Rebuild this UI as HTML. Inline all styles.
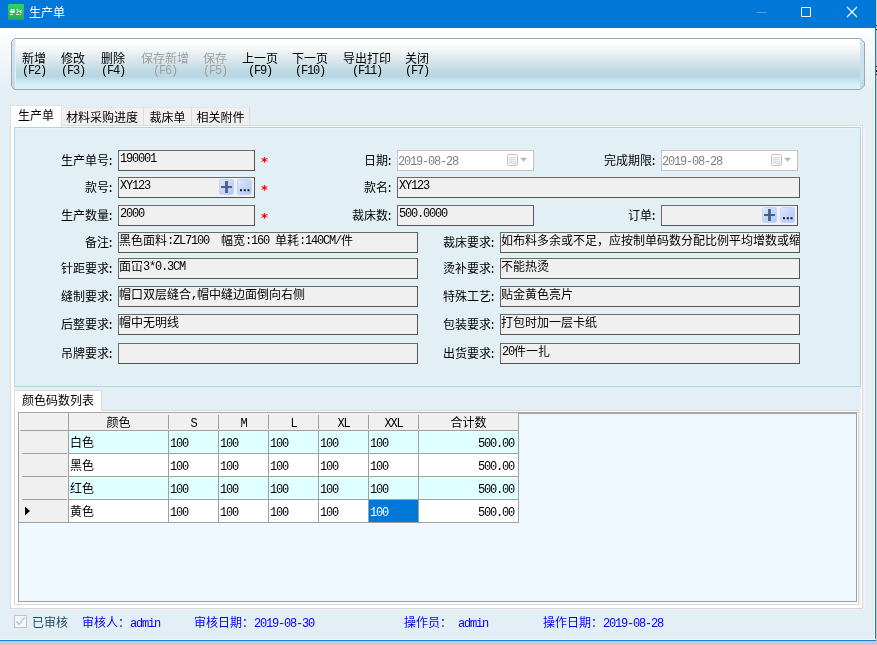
<!DOCTYPE html>
<html lang="zh-CN">
<head>
<meta charset="utf-8">
<title>生产单</title>
<style>
html,body{margin:0;padding:0;}
body{width:877px;height:645px;overflow:hidden;position:relative;background:linear-gradient(#c8c4c4 0,#c8c4c4 641px,#c8c5c6 642px,#c6cad2 643px);
 font-family:"Liberation Mono","Noto Sans CJK SC",monospace;font-size:12px;line-height:12px;color:#000;}
.abs,.win *{position:absolute;box-sizing:border-box;}
.win{position:absolute;left:0;top:0;width:876px;height:641px;background:#e3eff4;overflow:hidden;will-change:transform;}
.l{position:relative !important;top:0;font-family:"Liberation Mono",monospace;font-size:12px;letter-spacing:-1.2px;}
.title{left:0;top:0;width:876px;height:28px;background:#0078d7;}
.title .cap{left:29px;top:8px;color:#fff;white-space:nowrap;}
.bg{left:0;top:28px;width:875px;height:80px;background:linear-gradient(#ffffff 0,#fbfdfe 6px,#e3eff4 64px);}
.edgeR{left:874px;top:28px;width:2px;height:613px;background:#1c80d8;border-left:1px solid #f3f8fa;}
.edgeB{left:0;top:639px;width:876px;height:2px;background:#1c80d8;border-top:1px solid #f3f8fa;}
/* toolbar */
.tb{left:11px;top:38px;width:854px;height:52px;}
.btn{top:17px;height:24px;line-height:11px;text-align:center;white-space:nowrap;}
.btn.dis{color:#a0a0a0;}
/* tabs */
.tab{top:107px;height:18px;background:#f0f0f0;border:1px solid #dcdcdc;border-top-color:#e6e6e6;border-bottom:none;text-align:center;padding-top:5px;white-space:nowrap;}
.tab.act{top:105px;height:22px;background:#fff;border-color:#e2e2e2;padding-top:5px;}
.lab{width:110px;text-align:right;white-space:nowrap;}
.lab .l{margin-left:-2px;}
.inp{height:21px;background:#f0f0f0;border:1px solid #6a6a6a;border-right-color:#555;border-bottom-color:#555;padding:3px 0 0 0;white-space:nowrap;overflow:hidden;}
.inp .l{top:-1px;}
.inp .l0{margin-left:1px;}
.date{height:21px;background:#fff;border:1px solid #cbc3c3;color:#7f7f7f;padding:5px 0 0 0;white-space:nowrap;overflow:hidden;}
.star{color:#f00;width:10px;font-size:13px;line-height:14px;font-family:"DejaVu Sans",sans-serif;font-weight:bold;}
.sb{width:15px;height:16px;border-radius:2px;background:linear-gradient(#d3e0fb,#b4c8f3);border:1px solid #c3d3f7;}
.st{top:618px;color:#0000ff;white-space:nowrap;}
</style>
</head>
<body>
<div class="win">
 <div class="bg"></div>
 <div class="title">
  <svg style="left:8px;top:4px" width="16" height="16" viewBox="0 0 16 16"><defs><linearGradient id="ig" x1="0" y1="0" x2="0" y2="1"><stop offset="0" stop-color="#35cf6c"/><stop offset="1" stop-color="#24aa52"/></linearGradient></defs><rect x="0" y="0" width="16" height="16" rx="1.6" fill="url(#ig)"/><path d="M2.2 5.2h4.1l0.5 3.6H2v-1.9h0.9z" fill="#fff"/><circle cx="4.5" cy="6.6" r="0.5" fill="#2cbc5f"/><g fill="#eafbee"><rect x="2" y="10" width="3" height="1"/><rect x="8.1" y="10" width="2.8" height="1"/><rect x="11.8" y="10" width="1.3" height="1"/></g><path d="M9 5.4l4.2 3M9.3 8.4l1.4-2.2M13.4 5.8l-0.6 1.6" stroke="#fff" stroke-width="0.9" fill="none"/><g fill="#fff"><circle cx="9.1" cy="5.4" r="0.6"/><circle cx="9.2" cy="8.4" r="0.6"/><circle cx="12.9" cy="8.4" r="0.6"/></g></svg>
  <div class="cap">生产单</div>
  <svg style="left:740px;top:0" width="136" height="28" viewBox="0 0 136 28"><path d="M16.5 12.5h10" stroke="#5aa4e3" stroke-width="1" fill="none"/><path d="M61.5 7.5h9v9h-9z" stroke="#fff" stroke-width="1" fill="none"/><path d="M107 7l10 10M117 7l-10 10" stroke="#fff" stroke-width="1.1" fill="none"/></svg>
 </div>
 <svg style="left:11px;top:38px" width="854" height="52" viewBox="0 0 854 52"><defs><linearGradient id="tg" x1="0" y1="0" x2="0" y2="1"><stop offset="0" stop-color="#ffffff"/><stop offset="0.12" stop-color="#fbfdfd"/><stop offset="0.4" stop-color="#dde9ee"/><stop offset="0.66" stop-color="#bcd8e3"/><stop offset="0.75" stop-color="#b8d6e2"/><stop offset="0.9" stop-color="#d2f1fb"/><stop offset="1" stop-color="#d6f4fe"/></linearGradient><linearGradient id="tv" x1="0" y1="0" x2="0" y2="1"><stop offset="0" stop-color="#d2e7f0"/><stop offset="1" stop-color="#c0dce8"/></linearGradient></defs><path d="M3.5 0.5H849.5L853.5 4.5V47.5L849.5 51.5H3.5L0.5 48.5V3.5Z" fill="url(#tv)" stroke="#a0a8ae" stroke-width="1"/><rect x="4" y="1" width="845" height="50" fill="url(#tg)"/><path d="M4.5 1v50" stroke="#e4f1f7" stroke-width="1" fill="none"/></svg>
 <div class="tb" id="tb">
  <div class="btn" style="left:3px;width:40px">新增<br><span class="l">(F2)</span></div>
  <div class="btn" style="left:42px;width:40px">修改<br><span class="l">(F3)</span></div>
  <div class="btn" style="left:82px;width:40px">删除<br><span class="l">(F4)</span></div>
  <div class="btn dis" style="left:122px;width:64px">保存新增<br><span class="l">(F6)</span></div>
  <div class="btn dis" style="left:184px;width:40px">保存<br><span class="l">(F5)</span></div>
  <div class="btn" style="left:223px;width:52px">上一页<br><span class="l">(F9)</span></div>
  <div class="btn" style="left:273px;width:52px">下一页<br><span class="l">(F10)</span></div>
  <div class="btn" style="left:324px;width:64px">导出打印<br><span class="l">(F11)</span></div>
  <div class="btn" style="left:386px;width:40px">关闭<br><span class="l">(F7)</span></div>
 </div>
 <div id="tabs">
  <div style="left:11px;top:125px;width:854px;height:485px;background:#f0f0f0"></div>
  <div style="left:10px;top:125px;width:853px;height:484px;background:#d9d9d9"></div>
  <div style="left:11px;top:126px;width:851px;height:482px;background:#fff"></div>
  <div style="left:14px;top:127px;width:847px;height:478px;background:#e3eff4"></div>
  <div class="tab" style="left:60px;width:84px">材料采购进度</div>
  <div class="tab" style="left:143px;width:49px">裁床单</div>
  <div class="tab" style="left:191px;width:59px">相关附件</div>
  <div class="tab act" style="left:10px;width:52px">生产单</div>
  <div style="left:14px;top:127px;width:847px;height:260px;border:1px solid #acd6e6;background:#e2eff4"></div>
  <div style="left:15px;top:128px;width:845px;height:258px;border:1px solid #e8f1f5;border-right:none;border-bottom:none"></div>
 </div>
 <div id="form">
  <div class="lab" style="left:3px;top:156px">生产单号<span class="l">:</span></div>
  <div class="inp" style="left:118px;top:150px;width:137px"><span class="l l0">190001</span></div>
  <div class="star" style="left:261px;top:155px">*</div>
  <div class="lab" style="left:3px;top:183px">款号<span class="l">:</span></div>
  <div class="inp" style="left:118px;top:177px;width:137px"><span class="l l0">XY123</span></div>
  <svg style="left:219px;top:179px" width="15" height="16" viewBox="0 0 15 16"><defs><linearGradient id="sg1" x1="0" y1="0" x2="1" y2="1"><stop offset="0" stop-color="#e0e9fc"/><stop offset="0.5" stop-color="#c6d6f8"/><stop offset="1" stop-color="#b0c6f4"/></linearGradient></defs><rect x="0.5" y="0.5" width="14" height="15" rx="2" fill="url(#sg1)" stroke="#c4d4f8"/><rect x="6.1" y="2" width="2.8" height="12" fill="#4a6186"/><rect x="2" y="7" width="11" height="2" fill="#4a6186"/></svg>
  <svg style="left:237px;top:179px" width="15" height="16" viewBox="0 0 15 16"><defs><linearGradient id="sg3" x1="0" y1="0" x2="1" y2="1"><stop offset="0" stop-color="#e0e9fc"/><stop offset="0.5" stop-color="#c6d6f8"/><stop offset="1" stop-color="#b0c6f4"/></linearGradient></defs><rect x="0.5" y="0.5" width="14" height="15" rx="2" fill="url(#sg3)" stroke="#c4d4f8"/><g fill="#1a1c2c"><rect x="3" y="10.2" width="2" height="2"/><rect x="6.8" y="10.2" width="2" height="2"/><rect x="10.5" y="10.2" width="2" height="2"/></g></svg>
  <div class="star" style="left:261px;top:183px">*</div>
  <div class="lab" style="left:3px;top:211px">生产数量<span class="l">:</span></div>
  <div class="inp" style="left:118px;top:205px;width:137px"><span class="l l0">2000</span></div>
  <div class="star" style="left:261px;top:211px">*</div>
  <div class="lab" style="left:282px;top:156px">日期<span class="l">:</span></div>
  <div class="date" style="left:397px;top:150px;width:137px"><span class="l">2019-08-28</span></div>
  <svg style="left:507px;top:154px" width="22" height="13" viewBox="0 0 22 13"><rect x="0.5" y="0.5" width="10" height="11" rx="1.3" fill="#fdfcfd" stroke="#c9bebe"/><rect x="2" y="3" width="6.6" height="7" fill="#dddeea"/><g fill="#fafaff"><rect x="2.9" y="3.9" width="1" height="1"/><rect x="2.9" y="6.0" width="1" height="1"/><rect x="2.9" y="8.1" width="1" height="1"/><rect x="5.0" y="3.9" width="1" height="1"/><rect x="5.0" y="6.0" width="1" height="1"/><rect x="5.0" y="8.1" width="1" height="1"/><rect x="7.1" y="3.9" width="1" height="1"/><rect x="7.1" y="6.0" width="1" height="1"/><rect x="7.1" y="8.1" width="1" height="1"/></g><path d="M8 11.5v-2.5h2.5" stroke="#d5cccc" fill="#fff"/><path d="M13 3.8h7.2l-3.6 4z" fill="#b7b7ae"/></svg>
  <div class="lab" style="left:282px;top:183px">款名<span class="l">:</span></div>
  <div class="inp" style="left:397px;top:177px;width:403px"><span class="l l0">XY123</span></div>
  <div class="lab" style="left:282px;top:211px">裁床数<span class="l">:</span></div>
  <div class="inp" style="left:397px;top:205px;width:137px"><span class="l l0">500.0000</span></div>
  <div class="lab" style="left:546px;top:156px">完成期限<span class="l">:</span></div>
  <div class="date" style="left:661px;top:150px;width:137px"><span class="l">2019-08-28</span></div>
  <svg style="left:771px;top:154px" width="22" height="13" viewBox="0 0 22 13"><rect x="0.5" y="0.5" width="10" height="11" rx="1.3" fill="#fdfcfd" stroke="#c9bebe"/><rect x="2" y="3" width="6.6" height="7" fill="#dddeea"/><g fill="#fafaff"><rect x="2.9" y="3.9" width="1" height="1"/><rect x="2.9" y="6.0" width="1" height="1"/><rect x="2.9" y="8.1" width="1" height="1"/><rect x="5.0" y="3.9" width="1" height="1"/><rect x="5.0" y="6.0" width="1" height="1"/><rect x="5.0" y="8.1" width="1" height="1"/><rect x="7.1" y="3.9" width="1" height="1"/><rect x="7.1" y="6.0" width="1" height="1"/><rect x="7.1" y="8.1" width="1" height="1"/></g><path d="M8 11.5v-2.5h2.5" stroke="#d5cccc" fill="#fff"/><path d="M13 3.8h7.2l-3.6 4z" fill="#b7b7ae"/></svg>
  <div class="lab" style="left:546px;top:211px">订单<span class="l">:</span></div>
  <div class="inp" style="left:661px;top:205px;width:137px"></div>
  <svg style="left:762px;top:207px" width="15" height="16" viewBox="0 0 15 16"><defs><linearGradient id="sg2" x1="0" y1="0" x2="1" y2="1"><stop offset="0" stop-color="#e0e9fc"/><stop offset="0.5" stop-color="#c6d6f8"/><stop offset="1" stop-color="#b0c6f4"/></linearGradient></defs><rect x="0.5" y="0.5" width="14" height="15" rx="2" fill="url(#sg2)" stroke="#c4d4f8"/><rect x="6.1" y="2" width="2.8" height="12" fill="#4a6186"/><rect x="2" y="7" width="11" height="2" fill="#4a6186"/></svg>
  <svg style="left:780px;top:207px" width="15" height="16" viewBox="0 0 15 16"><defs><linearGradient id="sg4" x1="0" y1="0" x2="1" y2="1"><stop offset="0" stop-color="#e0e9fc"/><stop offset="0.5" stop-color="#c6d6f8"/><stop offset="1" stop-color="#b0c6f4"/></linearGradient></defs><rect x="0.5" y="0.5" width="14" height="15" rx="2" fill="url(#sg4)" stroke="#c4d4f8"/><g fill="#1a1c2c"><rect x="3" y="10.2" width="2" height="2"/><rect x="6.8" y="10.2" width="2" height="2"/><rect x="10.5" y="10.2" width="2" height="2"/></g></svg>
  <div class="lab" style="left:3px;top:238px">备注<span class="l">:</span></div>
  <div class="inp" style="left:118px;top:232px;width:300px">黑色面料<span class="l">:ZL7100&nbsp;&nbsp;</span>幅宽<span class="l">:160&nbsp;</span>单耗<span class="l">:140CM/</span>件</div>
  <div class="lab" style="left:385px;top:238px">裁床要求<span class="l">:</span></div>
  <div class="inp" style="left:500px;top:232px;width:300px">如布料多余或不足，应按制单码数分配比例平均增数或缩数</div>
  <div class="lab" style="left:3px;top:264px">针距要求<span class="l">:</span></div>
  <div class="inp" style="left:118px;top:258px;width:300px">面冚<span class="l">3*0.3CM</span></div>
  <div class="lab" style="left:385px;top:264px">烫补要求<span class="l">:</span></div>
  <div class="inp" style="left:500px;top:258px;width:300px">不能热烫</div>
  <div class="lab" style="left:3px;top:292px">缝制要求<span class="l">:</span></div>
  <div class="inp" style="left:118px;top:286px;width:300px">帽口双层缝合<span class="l">,</span>帽中缝边面倒向右侧</div>
  <div class="lab" style="left:385px;top:292px">特殊工艺<span class="l">:</span></div>
  <div class="inp" style="left:500px;top:286px;width:300px">贴金黄色亮片</div>
  <div class="lab" style="left:3px;top:320px">后整要求<span class="l">:</span></div>
  <div class="inp" style="left:118px;top:314px;width:300px">帽中无明线</div>
  <div class="lab" style="left:385px;top:320px">包装要求<span class="l">:</span></div>
  <div class="inp" style="left:500px;top:314px;width:300px">打包时加一层卡纸</div>
  <div class="lab" style="left:3px;top:349px">吊牌要求<span class="l">:</span></div>
  <div class="inp" style="left:118px;top:343px;width:300px"></div>
  <div class="lab" style="left:385px;top:349px">出货要求<span class="l">:</span></div>
  <div class="inp" style="left:500px;top:343px;width:300px"><span class="l l0">20</span>件一扎</div>
 </div>
 <div id="grid">
  <div style="left:15px;top:410px;width:846px;height:195px;background:#f0f0f0"></div>
  <div style="left:14px;top:410px;width:845px;height:195px;background:#d9d9d9"></div>
  <div style="left:15px;top:411px;width:843px;height:193px;background:#fff"></div>
  <div style="left:14px;top:390px;width:88px;height:21px;background:#fff;border:1px solid #dcdcdc;border-bottom:none;padding:5px 0 0 7px;white-space:nowrap">颜色码数列表</div>
  <div style="left:18px;top:412px;width:839px;height:190px;border:1px solid #a0a0a4;border-top:2px solid #a6a6aa;background:#f0f8ff"></div>
  <div style="left:19px;top:413px;width:500px;height:110px;background:#a0a0a0"></div>
  <div style="left:19px;top:413px;width:499px;height:17px;background:#f0f0f0"></div>
  <div style="left:19px;top:414px;width:1px;height:108px;background:#fafafa"></div>
  <div style="left:68px;top:413px;width:1px;height:17px;background:#a0a0a0"></div>
  <div style="left:69px;top:418px;width:99px;text-align:center;white-space:nowrap">颜色</div>
  <div style="left:168px;top:415px;width:1px;height:14px;background:#a0a0a0"></div>
  <div style="left:169px;top:418px;width:49px;text-align:center;white-space:nowrap"><span class="l">S</span></div>
  <div style="left:218px;top:415px;width:1px;height:14px;background:#a0a0a0"></div>
  <div style="left:219px;top:418px;width:49px;text-align:center;white-space:nowrap"><span class="l">M</span></div>
  <div style="left:268px;top:415px;width:1px;height:14px;background:#a0a0a0"></div>
  <div style="left:269px;top:418px;width:49px;text-align:center;white-space:nowrap"><span class="l">L</span></div>
  <div style="left:318px;top:415px;width:1px;height:14px;background:#a0a0a0"></div>
  <div style="left:319px;top:418px;width:49px;text-align:center;white-space:nowrap"><span class="l">XL</span></div>
  <div style="left:368px;top:415px;width:1px;height:14px;background:#a0a0a0"></div>
  <div style="left:369px;top:418px;width:49px;text-align:center;white-space:nowrap"><span class="l">XXL</span></div>
  <div style="left:418px;top:415px;width:1px;height:14px;background:#a0a0a0"></div>
  <div style="left:419px;top:418px;width:99px;text-align:center;white-space:nowrap">合计数</div>
  <div style="left:19px;top:431px;width:49px;height:22px;background:#f0f0f0"></div>
  <div style="left:69px;top:431px;width:99px;height:22px;background:#e0ffff;padding-top:7px;text-align:left;padding-left:1px;white-space:nowrap">白色</div>
  <div style="left:169px;top:431px;width:49px;height:22px;background:#e0ffff;padding-top:7px;text-align:left;padding-left:1px;white-space:nowrap"><span class="l">100</span></div>
  <div style="left:219px;top:431px;width:49px;height:22px;background:#e0ffff;padding-top:7px;text-align:left;padding-left:1px;white-space:nowrap"><span class="l">100</span></div>
  <div style="left:269px;top:431px;width:49px;height:22px;background:#e0ffff;padding-top:7px;text-align:left;padding-left:1px;white-space:nowrap"><span class="l">100</span></div>
  <div style="left:319px;top:431px;width:49px;height:22px;background:#e0ffff;padding-top:7px;text-align:left;padding-left:1px;white-space:nowrap"><span class="l">100</span></div>
  <div style="left:369px;top:431px;width:49px;height:22px;background:#e0ffff;padding-top:7px;text-align:left;padding-left:1px;white-space:nowrap"><span class="l">100</span></div>
  <div style="left:419px;top:431px;width:99px;height:22px;background:#e0ffff;padding-top:7px;text-align:right;padding-right:4px;white-space:nowrap"><span class="l">500.00</span></div>
  <div style="left:19px;top:454px;width:49px;height:22px;background:#f0f0f0"></div>
  <div style="left:19px;top:453px;width:3px;height:1px;background:#f0f0f0"></div><div style="left:67px;top:453px;width:1px;height:1px;background:#f0f0f0"></div>
  <div style="left:69px;top:454px;width:99px;height:22px;background:#fff;padding-top:7px;text-align:left;padding-left:1px;white-space:nowrap">黑色</div>
  <div style="left:169px;top:454px;width:49px;height:22px;background:#fff;padding-top:7px;text-align:left;padding-left:1px;white-space:nowrap"><span class="l">100</span></div>
  <div style="left:219px;top:454px;width:49px;height:22px;background:#fff;padding-top:7px;text-align:left;padding-left:1px;white-space:nowrap"><span class="l">100</span></div>
  <div style="left:269px;top:454px;width:49px;height:22px;background:#fff;padding-top:7px;text-align:left;padding-left:1px;white-space:nowrap"><span class="l">100</span></div>
  <div style="left:319px;top:454px;width:49px;height:22px;background:#fff;padding-top:7px;text-align:left;padding-left:1px;white-space:nowrap"><span class="l">100</span></div>
  <div style="left:369px;top:454px;width:49px;height:22px;background:#fff;padding-top:7px;text-align:left;padding-left:1px;white-space:nowrap"><span class="l">100</span></div>
  <div style="left:419px;top:454px;width:99px;height:22px;background:#fff;padding-top:7px;text-align:right;padding-right:4px;white-space:nowrap"><span class="l">500.00</span></div>
  <div style="left:19px;top:477px;width:49px;height:22px;background:#f0f0f0"></div>
  <div style="left:19px;top:476px;width:3px;height:1px;background:#f0f0f0"></div><div style="left:67px;top:476px;width:1px;height:1px;background:#f0f0f0"></div>
  <div style="left:69px;top:477px;width:99px;height:22px;background:#e0ffff;padding-top:7px;text-align:left;padding-left:1px;white-space:nowrap">红色</div>
  <div style="left:169px;top:477px;width:49px;height:22px;background:#e0ffff;padding-top:7px;text-align:left;padding-left:1px;white-space:nowrap"><span class="l">100</span></div>
  <div style="left:219px;top:477px;width:49px;height:22px;background:#e0ffff;padding-top:7px;text-align:left;padding-left:1px;white-space:nowrap"><span class="l">100</span></div>
  <div style="left:269px;top:477px;width:49px;height:22px;background:#e0ffff;padding-top:7px;text-align:left;padding-left:1px;white-space:nowrap"><span class="l">100</span></div>
  <div style="left:319px;top:477px;width:49px;height:22px;background:#e0ffff;padding-top:7px;text-align:left;padding-left:1px;white-space:nowrap"><span class="l">100</span></div>
  <div style="left:369px;top:477px;width:49px;height:22px;background:#e0ffff;padding-top:7px;text-align:left;padding-left:1px;white-space:nowrap"><span class="l">100</span></div>
  <div style="left:419px;top:477px;width:99px;height:22px;background:#e0ffff;padding-top:7px;text-align:right;padding-right:4px;white-space:nowrap"><span class="l">500.00</span></div>
  <div style="left:19px;top:500px;width:49px;height:22px;background:#f0f0f0"></div>
  <div style="left:19px;top:499px;width:3px;height:1px;background:#f0f0f0"></div><div style="left:67px;top:499px;width:1px;height:1px;background:#f0f0f0"></div>
  <div style="left:69px;top:500px;width:99px;height:22px;background:#fff;padding-top:7px;text-align:left;padding-left:1px;white-space:nowrap">黄色</div>
  <div style="left:169px;top:500px;width:49px;height:22px;background:#fff;padding-top:7px;text-align:left;padding-left:1px;white-space:nowrap"><span class="l">100</span></div>
  <div style="left:219px;top:500px;width:49px;height:22px;background:#fff;padding-top:7px;text-align:left;padding-left:1px;white-space:nowrap"><span class="l">100</span></div>
  <div style="left:269px;top:500px;width:49px;height:22px;background:#fff;padding-top:7px;text-align:left;padding-left:1px;white-space:nowrap"><span class="l">100</span></div>
  <div style="left:319px;top:500px;width:49px;height:22px;background:#fff;padding-top:7px;text-align:left;padding-left:1px;white-space:nowrap"><span class="l">100</span></div>
  <div style="left:369px;top:500px;width:49px;height:22px;background:#0078d7;padding-top:7px;text-align:left;padding-left:1px;white-space:nowrap;color:#fff"><span class="l">100</span></div>
  <div style="left:419px;top:500px;width:99px;height:22px;background:#fff;padding-top:7px;text-align:right;padding-right:4px;white-space:nowrap"><span class="l">500.00</span></div>
  <svg style="left:24px;top:506px" width="7" height="10" viewBox="0 0 7 10"><path d="M1 0.5v9l5-4.5z" fill="#000"/></svg>
 </div>
 <div id="status">
  <div style="left:14px;top:615px;width:13px;height:13px;border:1px solid #c0c4c8;background:#f4f6f8"><svg style="left:0;top:0" width="11" height="11" viewBox="0 0 11 11"><path d="M1.5 5.5l2.5 3 5.5-7" stroke="#b8bcc0" stroke-width="1.2" fill="none"/></svg></div>
  <div class="st" style="left:32px;color:#1e4a5e">已审核</div>
  <div class="st" style="left:82px">审核人：<span class="l">admin</span></div>
  <div class="st" style="left:194px">审核日期：<span class="l">2019-08-30</span></div>
  <div class="st" style="left:404px">操作员：<span class="l">&nbsp;admin</span></div>
  <div class="st" style="left:543px">操作日期：<span class="l">2019-08-28</span></div>
 </div>
 <div class="edgeR"></div>
 <div class="edgeB"></div>
</div>
<div class="abs" style="left:876px;top:0;width:1px;height:57px;background:#b9cdd7"></div>
<div class="abs" style="left:876px;top:25px;width:1px;height:1px;background:#1a1a1a"></div>
<div class="abs" style="left:876px;top:29px;width:1px;height:1px;background:#1a1a1a"></div>
<div class="abs" style="left:876px;top:66px;width:1px;height:1px;background:#1a1a1a"></div>
<div class="abs" style="left:876px;top:70px;width:1px;height:2px;background:#1a1a1a"></div>
<div class="abs" style="left:876px;top:74px;width:1px;height:1px;background:#1a1a1a"></div>
</body>
</html>
